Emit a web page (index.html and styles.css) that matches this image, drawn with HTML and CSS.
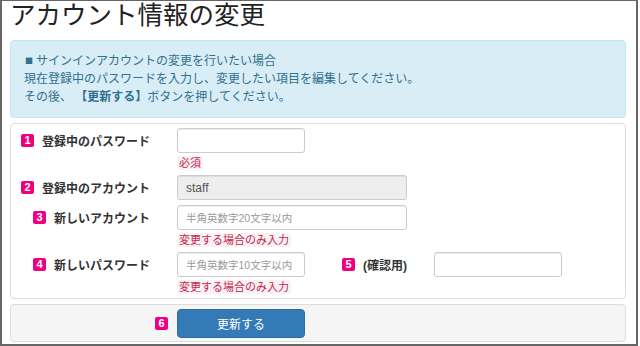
FILE: index.html
```html
<!DOCTYPE html>
<html lang="ja">
<head>
  <meta charset="UTF-8">
  <meta name="viewport" content="width=device-width, initial-scale=1.0">
  <title>アカウント情報の変更</title>
  <link rel="stylesheet" href="styles.css">
</head>
<body>
  <div class="frame">
    <h1 class="title">アカウント情報の変更</h1>

    <!-- Info message -->
    <div class="alert">
      <span class="mark">■</span>サインインアカウントの変更を行いたい場合<br>
      現在登録中のパスワードを入力し、変更したい項目を編集してください。<br>
      その後、 <b>【更新する】</b>ボタンを押してください。
    </div>

    <form class="panel" id="accountForm">
      <!-- Current password -->
      <div class="row">
        <label class="row-label" for="curPass"><span class="num">1</span>登録中のパスワード</label>
        <div class="field">
          <input type="password" id="curPass" class="input input-short">
          <span class="help">必須</span>
        </div>
      </div>

      <!-- Current account -->
      <div class="row">
        <label class="row-label" for="curAccount"><span class="num">2</span>登録中のアカウント</label>
        <div class="field">
          <input type="text" id="curAccount" class="input input-long" value="staff" disabled>
        </div>
      </div>

      <!-- New account -->
      <div class="row">
        <label class="row-label" for="newAccount"><span class="num">3</span>新しいアカウント</label>
        <div class="field">
          <input type="text" id="newAccount" class="input input-long" placeholder="半角英数字20文字以内">
          <span class="help">変更する場合のみ入力</span>
        </div>
      </div>

      <!-- New password + confirm -->
      <div class="row">
        <label class="row-label" for="newPass"><span class="num">4</span>新しいパスワード</label>
        <div class="field-pair">
          <div class="field">
            <input type="password" id="newPass" class="input input-short" placeholder="半角英数字10文字以内">
            <span class="help">変更する場合のみ入力</span>
          </div>
          <label class="sub-label" for="newPass2"><span class="num">5</span>(確認用)</label>
          <input type="password" id="newPass2" class="input input-short">
        </div>
      </div>
    </form>

    <div class="footer">
      <span class="num">6</span>
      <button type="submit" form="accountForm" class="btn">更新する</button>
    </div>
  </div>
</body>
</html>
```

FILE: styles.css
```css
body {
  margin: 0;
  background: #fff;
  font-family: "Liberation Sans", "Noto Sans CJK JP", sans-serif;
  font-size: 12px;
  color: #333;
}
.frame {
  width: 638px;
  height: 346px;
  box-sizing: border-box;
  border: 2px solid #666;
  border-top-width: 1px;
  padding: 0 10px 0 8px;
  overflow: hidden;
}
.title {
  margin: 0 0 11px;
  font-size: 25.5px;
  font-weight: normal;
  line-height: 28px;
  color: #222;
}
.alert {
  background: #d9edf7;
  border: 1px solid #bce8f1;
  border-radius: 4px;
  color: #31708f;
  padding: 11px 13px;
  line-height: 18px;
}
.alert b {
  font-weight: bold;
}
.mark {
  font-family: "Noto Sans CJK JP", sans-serif;
  font-size: 8px;
  margin: 0 3px 0 1px;
  vertical-align: 1px;
}
.panel {
  margin: 5px 0 0;
  border: 1px solid #ddd;
  border-radius: 4px;
  padding: 4px 0;
  display: flex;
  flex-direction: column;
  gap: 5px;
}
.row {
  display: grid;
  grid-template-columns: 139px auto;
  column-gap: 27px;
  align-items: start;
}
.row-label,
.sub-label {
  height: 25px;
  display: flex;
  align-items: center;
  justify-content: flex-end;
  font-weight: bold;
  color: #333;
}
.num {
  display: inline-flex;
  align-items: center;
  justify-content: center;
  width: 13px;
  height: 13px;
  border-radius: 2px;
  background: #f0007f;
  color: #fff;
  font-size: 11px;
  font-weight: bold;
  line-height: 13px;
  margin-right: 8px;
}
.field {
  display: flex;
  flex-direction: column;
  align-items: flex-start;
}
.field-pair {
  display: flex;
  align-items: flex-start;
}
.sub-label {
  width: 102px;
  margin-right: 27px;
}
.input {
  height: 25px;
  box-sizing: border-box;
  border: 1px solid #ccc;
  border-radius: 3px;
  box-shadow: inset 0 1px 1px rgba(0, 0, 0, 0.075);
  padding: 0 8px;
  font-family: inherit;
  font-size: 12px;
  color: #555;
  background: #fff;
}
.input::placeholder {
  color: #999;
  font-size: 10.5px;
}
.input:disabled {
  background: #eee;
  color: #555;
}
.input-short {
  width: 128px;
}
.input-long {
  width: 230px;
}
.help {
  margin-top: 3px;
  padding: 0 2px;
  background: #f9f2f4;
  color: #c7254e;
  border-radius: 3px;
  font-size: 11px;
  line-height: 14px;
}
.footer {
  margin-top: 5px;
  background: #f5f5f5;
  border: 1px solid #ddd;
  border-radius: 4px;
  padding: 4px 0 3px;
  display: grid;
  grid-template-columns: 157px 128px;
  column-gap: 9px;
  align-items: center;
}
.footer .num {
  justify-self: end;
  margin-right: 0;
}
.btn {
  height: 29px;
  border: 1px solid #2e6da4;
  border-radius: 4px;
  background: #337ab7;
  color: #fff;
  font-family: inherit;
  font-size: 12px;
}
```
